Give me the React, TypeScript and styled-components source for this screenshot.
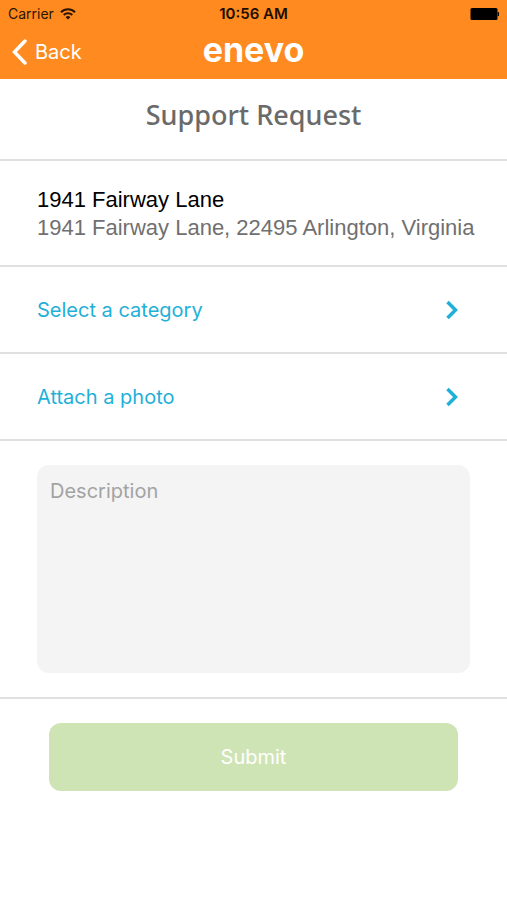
import React from "react";
import styled, { createGlobalStyle } from "styled-components";

const GlobalStyle = createGlobalStyle`
  *, *::before, *::after { box-sizing: border-box; }
  body { margin: 0; background: #fff; }
  button, textarea { font: inherit; }
`;

const sans = `Inter, "Liberation Sans", sans-serif`;
const line = "2px solid #e0e0e0";

const Screen = styled.div`
  min-height: 100vh;
  display: flex;
  flex-direction: column;
  background: #fff;
  font-family: ${sans};
  font-size: 20px;
  line-height: 28px;
`;

const Header = styled.header`
  background: #ff8a1f;
  padding-bottom: 2px;
`;

const Bar = styled.div<{ $height: number }>`
  display: grid;
  grid-template-columns: 1fr auto 1fr;
  align-items: center;
  height: ${(p) => p.$height}px;
  padding: 0 8px;
`;

const Carrier = styled.div`
  display: flex;
  align-items: center;
  gap: 6px;
  font-size: 14px;
  line-height: 20px;
  color: #2b1400;
`;

const Clock = styled.time`
  font-size: 15px;
  line-height: 20px;
  font-weight: 600;
  color: #1c0d00;
`;

const BatteryIcon = styled.svg`
  justify-self: end;
`;

const BackButton = styled.button`
  display: flex;
  align-items: center;
  justify-self: start;
  gap: 8px;
  padding: 0 4px;
  border: 0;
  background: none;
  color: #fff;
`;

const Brand = styled.div`
  padding-bottom: 4px;
  font-size: 34px;
  line-height: 40px;
  font-weight: 700;
  color: #fff;
`;

const Title = styled.h1`
  margin: 0;
  padding: 18px 24px 26px;
  border-bottom: ${line};
  text-align: center;
  font-family: "Noto Sans", "Open Sans", sans-serif;
  font-size: 27px;
  line-height: 36px;
  font-weight: 500;
  color: #6a6a6a;
`;

const Place = styled.address`
  padding: 25px 24px 23px 37px;
  border-bottom: ${line};
  font-family: "Liberation Sans", Arial, sans-serif;
  font-style: normal;
  font-size: 22px;
  color: #707070;
`;

const PlaceName = styled.div`
  color: #000;
`;

const Row = styled.button`
  display: flex;
  align-items: center;
  justify-content: space-between;
  min-height: 87px;
  padding: 0 48px 0 37px;
  border: 0;
  border-bottom: ${line};
  background: none;
  text-align: left;
  color: #1fb0d8;
`;

const Field = styled.div`
  display: flex;
  padding: 24px 37px;
  border-bottom: ${line};
`;

const Description = styled.textarea`
  flex: 1;
  min-width: 0;
  height: 208px;
  padding: 12px 13px;
  border: 0;
  border-radius: 12px;
  outline: none;
  resize: none;
  background: #f4f4f4;
  color: #333;
  &::placeholder { color: #a3a3a3; opacity: 1; }
`;

const Actions = styled.div`
  display: flex;
  padding: 24px 49px;
`;

const Submit = styled.button`
  flex: 1;
  height: 68px;
  border: 0;
  border-radius: 12px;
  background: #cfe4b4;
  color: #fff;
`;

const Chevron = () => (
  <svg width="14" height="20" viewBox="0 0 14 20" fill="none" stroke="currentColor" strokeWidth="3.500" aria-hidden="true">
    <path d="M2.500 2l8 8-8 8" />
  </svg>
);

export default function App() {
  return (
    <Screen>
      <GlobalStyle />
      <Header>
        <Bar $height={27}>
          <Carrier>
            Carrier
            <svg width="16" height="12" viewBox="0 0 16 12" fill="none" stroke="currentColor" strokeWidth="2" role="img" aria-label="Wi-Fi">
              <path d="M1 4.200a10 10 0 0 1 14 0" />
              <path d="M3.700 7a6.200 6.200 0 0 1 8.600 0" />
              <path d="M8 11.600L5.600 9.200a3.400 3.400 0 0 1 4.800 0z" fill="currentColor" stroke="none" />
            </svg>
          </Carrier>
          <Clock>10:56 AM</Clock>
          <BatteryIcon width="30" height="12" viewBox="0 0 30 12" role="img" aria-label="Battery full">
            <rect x="1.500" width="27" height="12" rx="1.500" />
            <path d="M28.800 4a2 2 0 0 1 0 4z" />
          </BatteryIcon>
        </Bar>
        <Bar $height={50}>
          <BackButton type="button">
            <svg width="15" height="26" viewBox="0 0 15 26" fill="none" stroke="currentColor" strokeWidth="3.500" strokeLinecap="round" aria-hidden="true">
              <path d="M13 2L2.500 13 13 24" />
            </svg>
            Back
          </BackButton>
          <Brand>enevo</Brand>
        </Bar>
      </Header>
      <Title>Support Request</Title>
      <Place>
        <PlaceName>1941 Fairway Lane</PlaceName>
        1941 Fairway Lane, 22495 Arlington, Virginia
      </Place>
      <Row type="button">
        Select a category
        <Chevron />
      </Row>
      <Row type="button">
        Attach a photo
        <Chevron />
      </Row>
      <Field>
        <Description aria-label="Description" placeholder="Description" />
      </Field>
      <Actions>
        <Submit type="submit">Submit</Submit>
      </Actions>
    </Screen>
  );
}
